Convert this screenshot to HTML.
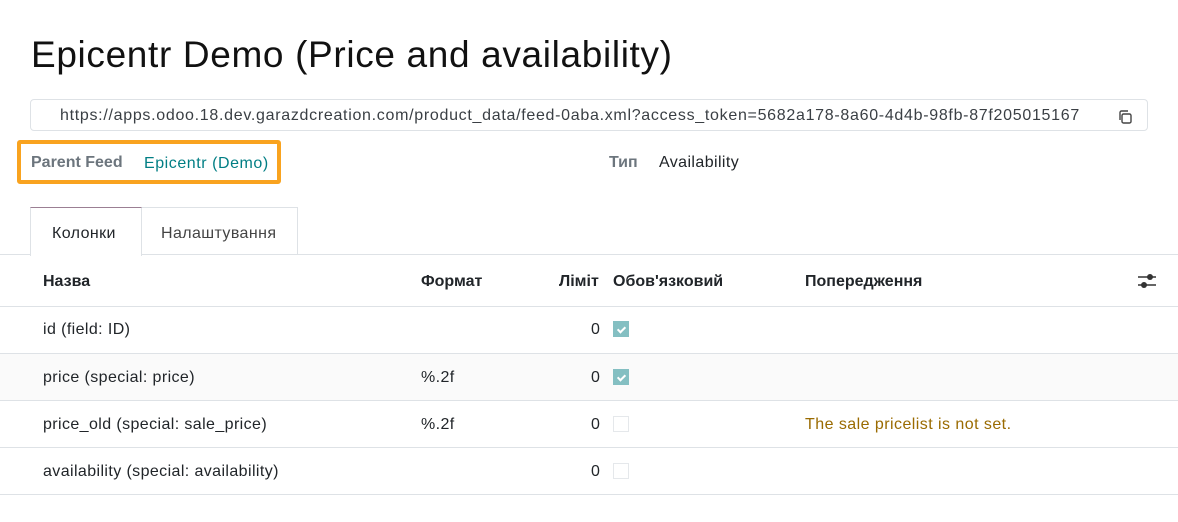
<!DOCTYPE html>
<html><head><meta charset="utf-8"><style>
body{margin:0;width:1178px;height:522px;background:#fff;font-family:"Liberation Sans","DejaVu Sans",sans-serif;color:#212529;position:relative;overflow:hidden}
.a{position:absolute;white-space:nowrap}
h1{position:absolute;left:31px;top:34px;margin:0;font-weight:400;font-size:37px;color:#111;letter-spacing:0.65px}
.url{position:absolute;left:30px;top:99px;width:1118px;height:32px;border:1px solid #dee2e6;border-radius:4px;box-sizing:border-box}
.pf{position:absolute;left:17px;top:140px;width:264px;height:44px;border:4px solid #f9a31f;border-radius:3px;box-sizing:border-box}
.row{position:absolute;left:0;width:1178px;border-bottom:1px solid #dee2e6;box-sizing:border-box}
.cb{position:absolute;left:613px;width:16px;height:16px;box-sizing:border-box}
.on{background:#84bfc2}
.on:after{content:"";position:absolute;left:6px;top:4px;width:3px;height:6px;border:solid #fff;border-width:0 2px 2px 0;transform:rotate(45deg)}
.off{border:1px solid #e5e8eb}
.t{font-size:16px;letter-spacing:0.4px}
.b{font-weight:bold;font-size:16px}
</style></head><body>
<h1>Epicentr Demo (Price and availability)</h1>
<div class="url"></div>
<div class="a t" style="left:60px;top:107px;color:#3a3f44;letter-spacing:0.7px">https://apps.odoo.18.dev.garazdcreation.com/product_data/feed-0aba.xml?access_token=5682a178-8a60-4d4b-98fb-87f205015167</div>
<svg class="a" style="left:1117px;top:109px" width="16" height="16" viewBox="0 0 16 16" fill="none" stroke="#444" stroke-width="1.4"><rect x="5" y="5" width="9" height="9" rx="1.5"/><path d="M3 11V3.5A1.5 1.5 0 0 1 4.5 2H11"/></svg>
<div class="pf"></div>
<div class="a b" style="left:31px;top:154px;color:#6c757d">Parent Feed</div>
<div class="a t" style="left:144px;top:155px;color:#017e84;letter-spacing:0.55px">Epicentr (Demo)</div>
<div class="a b" style="left:609px;top:154px;color:#6c757d">Тип</div>
<div class="a t" style="left:659px;top:154px">Availability</div>
<div class="a" style="left:30px;top:207px;width:110px;height:48px;border:1px solid #dee2e6;border-top:1px solid #9b7f93;border-bottom:none;background:#fff;z-index:2"></div>
<div class="a" style="left:140px;top:207px;width:157px;height:47px;border:1px solid #dee2e6;border-left:none;border-bottom:none"></div>
<div class="a t" style="left:52px;top:225px;z-index:3">Колонки</div>
<div class="a t" style="left:161px;top:225px;color:#444">Налаштування</div>
<div class="row" style="top:254px;height:1px;border-bottom:1px solid #dee2e6"></div>
<div class="row" style="top:255px;height:52px"></div>
<div class="a b" style="left:43px;top:273px">Назва</div>
<div class="a b" style="left:421px;top:273px">Формат</div>
<div class="a b" style="left:559px;top:273px">Ліміт</div>
<div class="a b" style="left:613px;top:273px">Обов'язковий</div>
<div class="a b" style="left:805px;top:273px">Попередження</div>
<svg class="a" style="left:1137px;top:272px" width="20" height="18" viewBox="0 0 20 18"><path d="M1 5h18M1 13h18" stroke="#333" stroke-width="1.6"/><circle cx="13" cy="5" r="3" fill="#333"/><circle cx="7" cy="13" r="3" fill="#333"/></svg>
<div class="row" style="top:307px;height:47px"></div>
<div class="a t" style="left:43px;top:321px">id (field: ID)</div>
<div class="a t" style="left:591px;top:321px">0</div>
<div class="cb on" style="top:321px"></div>
<div class="row" style="top:354px;height:47px;background:#fafafa"></div>
<div class="a t" style="left:43px;top:369px">price (special: price)</div>
<div class="a t" style="left:421px;top:369px">%.2f</div>
<div class="a t" style="left:591px;top:369px">0</div>
<div class="cb on" style="top:369px"></div>
<div class="row" style="top:401px;height:47px"></div>
<div class="a t" style="left:43px;top:416px">price_old (special: sale_price)</div>
<div class="a t" style="left:421px;top:416px">%.2f</div>
<div class="a t" style="left:591px;top:416px">0</div>
<div class="cb off" style="top:416px"></div>
<div class="a t" style="left:805px;top:416px;color:#9a6b01;letter-spacing:0.45px">The sale pricelist is not set.</div>
<div class="row" style="top:448px;height:47px"></div>
<div class="a t" style="left:43px;top:463px">availability (special: availability)</div>
<div class="a t" style="left:591px;top:463px">0</div>
<div class="cb off" style="top:463px"></div>
</body></html>
